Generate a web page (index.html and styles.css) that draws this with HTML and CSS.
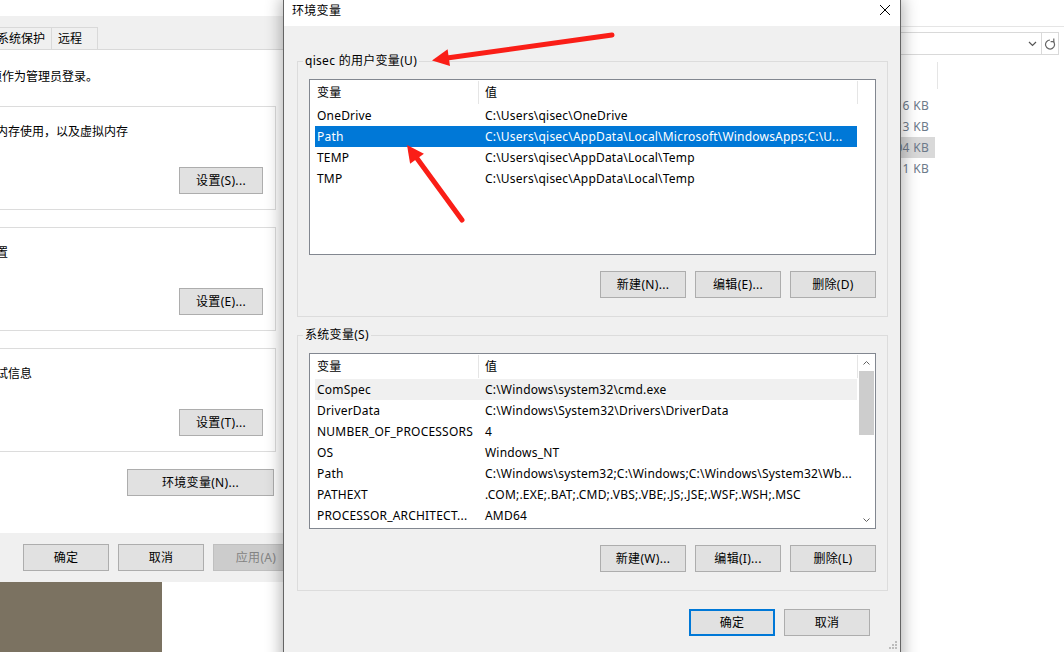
FILE: index.html
```html
<!DOCTYPE html>
<html lang="zh-CN">
<head>
    <meta charset="UTF-8" />
    <title>环境变量</title>
    <link rel="stylesheet" href="styles.css">
</head>
<body>
<div class="desk">
    <div class="wallpaper"></div>

    <!-- explorer window, mostly hidden behind the dialog -->
    <div class="explorer">
        <div class="ex-title"></div>
        <div class="ex-nav">
            <div class="ex-addr">
                <span class="ex-drop">
                    <svg width="9" height="6" viewBox="0 0 9 6"><path d="M1 1l3.5 3.5L8 1" fill="none" stroke="#555" stroke-width="1.2"/></svg>
                </span>
                <span class="ex-refresh">
                    <svg width="12" height="13" viewBox="0 0 12 13"><path d="M6 3A4.5 4.5 0 1 0 9.2 4.3" fill="none" stroke="#666" stroke-width="1.2"/><path d="M9.8 1.4V4.7H6.6" fill="none" stroke="#666" stroke-width="1.2"/></svg>
                </span>
            </div>
        </div>
        <div class="ex-head"></div>
        <div class="ex-list">
            <div class="ex-row">116 KB</div>
            <div class="ex-row">3 KB</div>
            <div class="ex-row sel">304 KB</div>
            <div class="ex-row">1 KB</div>
        </div>
    </div>

    <!-- system properties, advanced tab -->
    <div class="sysprops">
        <div class="sp-top"></div>
        <div class="sp-tabs">
            <div class="sp-tab">系统保护</div>
            <div class="sp-tab">远程</div>
        </div>
        <div class="sp-page">
            <p class="sp-note">要进行大多数更改，你必须作为管理员登录。</p>
            <fieldset class="sp-group">
                <legend>性能</legend>
                <p>视觉效果，处理器计划，内存使用，以及虚拟内存</p>
                <div class="sp-btns"><button class="btn small">设置(S)...</button></div>
            </fieldset>
            <fieldset class="sp-group">
                <legend>用户配置文件</legend>
                <p>与登录帐户相关的桌面设置</p>
                <div class="sp-btns"><button class="btn small">设置(E)...</button></div>
            </fieldset>
            <fieldset class="sp-group">
                <legend>启动和故障恢复</legend>
                <p>系统启动、系统故障和调试信息</p>
                <div class="sp-btns"><button class="btn small">设置(T)...</button></div>
            </fieldset>
            <div class="sp-env"><button class="btn wide">环境变量(N)...</button></div>
        </div>
        <div class="sp-foot">
            <button class="btn">确定</button>
            <button class="btn">取消</button>
            <button class="btn" disabled>应用(A)</button>
        </div>
    </div>

    <!-- environment variables dialog -->
    <div class="envdlg">
        <div class="dlg-title">
            <span>环境变量</span>
            <svg class="dlg-close" width="10" height="10" viewBox="0 0 10 10"><path d="M0 0L10 10M10 0L0 10" stroke="#000" stroke-width="1"/></svg>
        </div>
        <div class="dlg-body">
            <fieldset class="grp">
                <legend>qisec 的用户变量(U)</legend>
                <div class="lv">
                    <div class="lv-main">
                        <div class="lv-head"><span>变量</span><span>值</span></div>
                        <div class="lv-row"><span>OneDrive</span><span>C:\Users\qisec\OneDrive</span></div>
                        <div class="lv-row sel"><span>Path</span><span>C:\Users\qisec\AppData\Local\Microsoft\WindowsApps;C:\U...</span></div>
                        <div class="lv-row"><span>TEMP</span><span>C:\Users\qisec\AppData\Local\Temp</span></div>
                        <div class="lv-row"><span>TMP</span><span>C:\Users\qisec\AppData\Local\Temp</span></div>
                    </div>
                </div>
                <div class="grp-btns">
                    <button class="btn">新建(N)...</button>
                    <button class="btn">编辑(E)...</button>
                    <button class="btn">删除(D)</button>
                </div>
            </fieldset>

            <fieldset class="grp">
                <legend>系统变量(S)</legend>
                <div class="lv">
                    <div class="lv-main">
                        <div class="lv-head"><span>变量</span><span>值</span></div>
                        <div class="lv-row hot"><span>ComSpec</span><span>C:\Windows\system32\cmd.exe</span></div>
                        <div class="lv-row"><span>DriverData</span><span>C:\Windows\System32\Drivers\DriverData</span></div>
                        <div class="lv-row"><span>NUMBER_OF_PROCESSORS</span><span>4</span></div>
                        <div class="lv-row"><span>OS</span><span>Windows_NT</span></div>
                        <div class="lv-row"><span>Path</span><span>C:\Windows\system32;C:\Windows;C:\Windows\System32\Wb...</span></div>
                        <div class="lv-row"><span>PATHEXT</span><span>.COM;.EXE;.BAT;.CMD;.VBS;.VBE;.JS;.JSE;.WSF;.WSH;.MSC</span></div>
                        <div class="lv-row"><span>PROCESSOR_ARCHITECT...</span><span>AMD64</span></div>
                    </div>
                    <div class="lv-bar">
                        <div class="lv-arrow">
                            <svg width="7" height="4" viewBox="0 0 7 4"><path d="M0.5 3.5L3.5 0.5L6.5 3.5" fill="none" stroke="#606060"/></svg>
                        </div>
                        <div class="lv-thumb"></div>
                        <div class="lv-space"></div>
                        <div class="lv-arrow">
                            <svg width="7" height="4" viewBox="0 0 7 4"><path d="M0.5 0.5L3.5 3.5L6.5 0.5" fill="none" stroke="#606060"/></svg>
                        </div>
                    </div>
                </div>
                <div class="grp-btns">
                    <button class="btn">新建(W)...</button>
                    <button class="btn">编辑(I)...</button>
                    <button class="btn">删除(L)</button>
                </div>
            </fieldset>

            <div class="dlg-foot">
                <button class="btn default">确定</button>
                <button class="btn">取消</button>
            </div>
        </div>
        <svg class="grip" width="8" height="8" viewBox="0 0 8 8">
            <rect x="6" y="0" width="2" height="2" fill="#bcbcbc"/>
            <rect x="3" y="3" width="2" height="2" fill="#bcbcbc"/>
            <rect x="6" y="3" width="2" height="2" fill="#bcbcbc"/>
            <rect x="0" y="6" width="2" height="2" fill="#bcbcbc"/>
            <rect x="3" y="6" width="2" height="2" fill="#bcbcbc"/>
            <rect x="6" y="6" width="2" height="2" fill="#bcbcbc"/>
        </svg>
    </div>

    <!-- red annotation arrows -->
    <svg class="marks" width="1064" height="652" viewBox="0 0 1064 652">
        <line x1="612" y1="35" x2="447" y2="58" stroke="#fa1e17" stroke-width="5" stroke-linecap="round"/>
        <polygon points="432,60.5 447.6,49.3 450,66.1" fill="#fa1e17"/>
        <line x1="462" y1="220" x2="416" y2="157" stroke="#fa1e17" stroke-width="5" stroke-linecap="round"/>
        <polygon points="407,145 423.9,153.7 410.1,163.7" fill="#fa1e17"/>
    </svg>
</div>
</body>
</html>
```

FILE: styles.css
```css
body {
    margin: 0;
    font-family: "Noto Sans", "Noto Sans CJK SC", sans-serif;
    font-size: 12px;
    line-height: 16px;
    color: #000;
}

.desk {
    position: relative;
    width: 1064px;
    height: 652px;
    overflow: hidden;
    background: #fff;
}

.wallpaper {
    position: absolute;
    left: 0;
    top: 582px;
    width: 162px;
    height: 70px;
    background: #7b7261;
}

/* ---- buttons ---- */

.btn {
    width: 86px;
    height: 27px;
    box-sizing: border-box;
    padding: 0;
    border: 1px solid #adadad;
    background: #e1e1e1;
    font: inherit;
    letter-spacing: 0.3px;
    color: #000;
}

.btn.small {
    width: 84px;
}

.btn.wide {
    width: 147px;
}

.btn.default {
    border: 2px solid #0078d7;
}

.btn:disabled {
    background: #cccccc;
    border-color: #bfbfbf;
    color: #838383;
}

/* ---- explorer ---- */

.explorer {
    position: absolute;
    left: 560px;
    top: 0;
    width: 504px;
    height: 652px;
    background: #fff;
    letter-spacing: 0.3px;
}

.ex-title {
    height: 26px;
    border-bottom: 1px solid #e5e5e5;
}

.ex-nav {
    padding: 5px 5px 0 0;
}

.ex-addr {
    height: 23px;
    box-sizing: border-box;
    border: 1px solid #d9d9d9;
    display: flex;
    justify-content: flex-end;
    align-items: center;
}

.ex-drop {
    width: 17px;
    display: flex;
    justify-content: center;
}

.ex-refresh {
    width: 16px;
    height: 100%;
    border-left: 1px solid #d9d9d9;
    display: flex;
    align-items: center;
    justify-content: center;
}

.ex-head {
    margin-top: 7px;
    width: 378px;
    height: 27px;
    box-sizing: border-box;
    border-right: 1px solid #e5e5e5;
}

.ex-list {
    margin-top: 6px;
}

.ex-row {
    width: 375px;
    height: 21px;
    line-height: 21px;
    box-sizing: border-box;
    padding-right: 6px;
    text-align: right;
    color: #6d7a8a;
}

.ex-row.sel {
    background: #d9d9d9;
}

/* ---- system properties ---- */

.sysprops {
    position: absolute;
    left: -160px;
    top: 0;
    width: 470px;
    height: 582px;
    background: #f0f0f0;
    overflow: hidden;
}

.sp-top {
    height: 16px;
    background: #fff;
}

.sp-tabs {
    height: 33px;
    display: flex;
    align-items: flex-end;
    padding-left: 150px;
}

.sp-tab {
    height: 22px;
    box-sizing: border-box;
    border: 1px solid #d9d9d9;
    border-bottom: none;
    padding: 0 6px;
    line-height: 22px;
}

.sp-tab + .sp-tab {
    margin-left: -1px;
    width: 47px;
}

.sp-page {
    height: 484px;
    box-sizing: border-box;
    background: #fff;
    border-top: 1px solid #d9d9d9;
    padding: 0 34px 0 12px;
}

.sp-note {
    margin: 18px 0 0 6px;
    line-height: 18px;
}

.sp-group {
    margin: 12px 0 0;
    padding: 0 12px 15px 11px;
    border: 1px solid #dcdcdc;
}

.sp-group + .sp-group {
    margin-top: 9px;
}

.sp-group legend {
    padding: 0 2px;
    line-height: 16px;
}

.sp-group p {
    margin: 9px 0 0;
    line-height: 18px;
}

.sp-btns {
    display: flex;
    justify-content: flex-end;
    margin-top: 26px;
}

.sp-env {
    display: flex;
    justify-content: flex-end;
    margin: 17px 2px 0 0;
}

.sp-foot {
    height: 49px;
    box-sizing: border-box;
    padding: 11px 11px 0 0;
    display: flex;
    justify-content: flex-end;
    gap: 9px;
}

/* ---- environment variables dialog ---- */

.envdlg {
    position: absolute;
    left: 283px;
    top: 0;
    width: 618px;
    height: 670px;
    box-sizing: border-box;
    background: #f0f0f0;
    border: 1px solid #646464;
    border-top: none;
    box-shadow: 0 0 15px 2px rgba(0, 0, 0, 0.3);
    letter-spacing: 0.3px;
}

.dlg-title {
    height: 26px;
    background: #fff;
    display: flex;
    justify-content: space-between;
    align-items: flex-start;
    padding: 0 10px 0 8px;
    line-height: 21px;
}

.dlg-close {
    margin-top: 5px;
}

.dlg-body {
    padding: 27px 0 0 13px;
}

.grp {
    width: 591px;
    box-sizing: border-box;
    margin: 0;
    padding: 10px 11px 18px;
    border: 1px solid #dcdcdc;
}

.grp + .grp {
    margin-top: 10px;
}

.grp legend {
    padding: 0 2px;
    margin-left: -6px;
    line-height: 16px;
}

.lv {
    height: 176px;
    box-sizing: border-box;
    border: 1px solid #828790;
    background: #fff;
    display: flex;
}

.lv-main {
    flex: 1;
}

.lv-head,
.lv-row {
    display: grid;
    grid-template-columns: 164px 378px;
    margin-left: 5px;
    width: 542px;
}

.lv-head {
    height: 25px;
    grid-template-columns: 164px 379px;
}

.lv-head span {
    margin-top: 1px;
    height: 23px;
    line-height: 23px;
    padding-left: 2px;
    border-right: 1px solid #e5e5e5;
}

.lv-head span + span {
    padding-left: 6px;
}

.lv-row {
    height: 21px;
    line-height: 21px;
    letter-spacing: 0.2px;
}

.lv-row span {
    padding-left: 2px;
    white-space: nowrap;
    overflow: hidden;
}

.lv-row span + span {
    padding-left: 6px;
}

.lv-row.sel {
    background: #0078d7;
    color: #fff;
}

.lv-row.hot {
    background: #f0f0f0;
}

.lv-bar {
    width: 18px;
    display: flex;
    flex-direction: column;
    align-items: center;
}

.lv-arrow {
    height: 17px;
    width: 100%;
    display: flex;
    align-items: center;
    justify-content: center;
}

.lv-thumb {
    width: 15px;
    height: 64px;
    background: #cdcdcd;
}

.lv-space {
    flex: 1;
}

.grp-btns {
    display: flex;
    justify-content: flex-end;
    gap: 9px;
    margin-top: 16px;
}

.dlg-foot {
    display: flex;
    justify-content: flex-end;
    gap: 9px;
    margin-top: 18px;
    padding-right: 30px;
}

.grip {
    position: absolute;
    left: 605px;
    top: 641px;
}

.marks {
    position: absolute;
    left: 0;
    top: 0;
    pointer-events: none;
}
```
